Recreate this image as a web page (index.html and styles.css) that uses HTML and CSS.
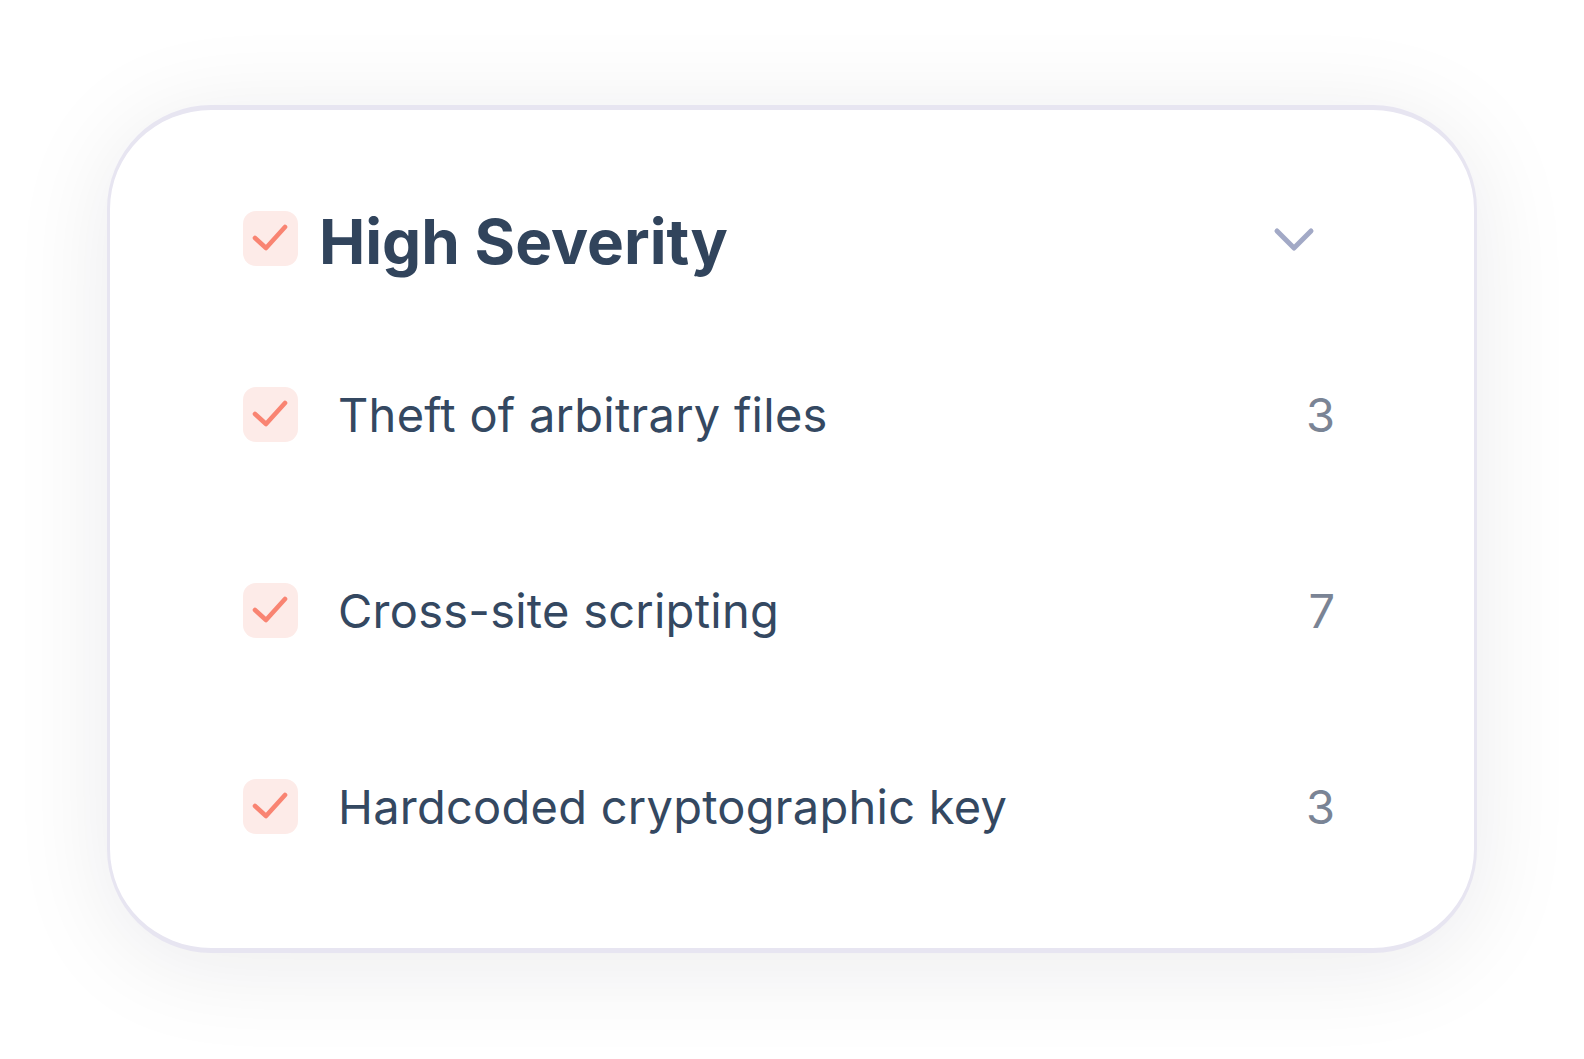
FILE: index.html
```html
<!DOCTYPE html>
<html lang="en">
<head>
<meta charset="utf-8">
<title>High Severity</title>
<link rel="stylesheet" href="styles.css">
</head>
<body>
  <section class="card">
    <header class="group-head">
      <span class="check">
        <svg viewBox="0 0 55 55" width="55" height="55"><path d="M12 27 L23 37 L42 16"/></svg>
      </span>
      <h2 class="group-title">High Severity</h2>
      <svg class="chevron" viewBox="0 0 42 26" width="42" height="26"><path d="M4 5 L21 22 L38 5"/></svg>
    </header>
    <ul class="issues">
      <li class="issue">
        <span class="check">
          <svg viewBox="0 0 55 55" width="55" height="55"><path d="M12 27 L23 37 L42 16"/></svg>
        </span>
        <span class="issue-name">Theft of arbitrary files</span>
        <span class="issue-count">3</span>
      </li>
      <li class="issue">
        <span class="check">
          <svg viewBox="0 0 55 55" width="55" height="55"><path d="M12 27 L23 37 L42 16"/></svg>
        </span>
        <span class="issue-name">Cross-site scripting</span>
        <span class="issue-count">7</span>
      </li>
      <li class="issue">
        <span class="check">
          <svg viewBox="0 0 55 55" width="55" height="55"><path d="M12 27 L23 37 L42 16"/></svg>
        </span>
        <span class="issue-name">Hardcoded cryptographic key</span>
        <span class="issue-count">3</span>
      </li>
    </ul>
  </section>
</body>
</html>
```
FILE: styles.css
```css
html, body {
  margin: 0;
  background: #ffffff;
}

html {
  height: 100%;
}

body {
  box-sizing: border-box;
  min-height: 100vh;
  padding: 105px 0 0 107px;
  font-family: Inter, "Noto Sans", sans-serif;
  color: #344861;
}

.card {
  box-sizing: border-box;
  width: 1370px;
  height: 848px;
  background: #ffffff;
  border-style: solid;
  border-color: #e7e5f1;
  border-width: 5px 3px;
  border-radius: 104px;
  box-shadow: 0 12px 100px rgba(20, 20, 40, 0.085);
  padding: 101px 139px 0 133px;
}

.group-head {
  display: flex;
  align-items: center;
  height: 55px;
}

.check {
  flex: none;
  width: 55px;
  height: 55px;
  border-radius: 13px;
  background: #fdebe8;
  display: block;
}

.check svg {
  display: block;
}

.check path {
  fill: none;
  stroke: #f98472;
  stroke-width: 4.6;
  stroke-linecap: round;
  stroke-linejoin: round;
}

.group-title {
  margin: 0 0 0 21px;
  font-size: 62px;
  font-weight: 700;
  color: #31445c;
  line-height: 1;
  flex: 1;
  position: relative;
  top: 3px;
}

.chevron {
  display: block;
  margin-right: 20px;
}

.chevron path {
  fill: none;
  stroke: #a2a9c6;
  stroke-width: 5;
  stroke-linecap: round;
  stroke-linejoin: round;
}

.issues {
  list-style: none;
  margin: 121px 0 0;
  padding: 0;
  display: flex;
  flex-direction: column;
  gap: 141px;
}

.issue {
  display: flex;
  align-items: center;
  height: 55px;
}

.issue-name {
  flex: 1;
  margin-left: 40px;
  font-size: 47px;
  font-weight: 400;
  letter-spacing: 0.25px;
  line-height: 1;
  color: #344861;
}

.issue-count {
  font-size: 47px;
  line-height: 1;
  color: #7a8495;
}
```
